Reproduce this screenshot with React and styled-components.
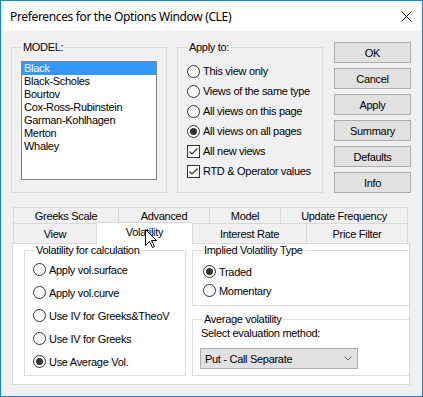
import React from 'react';
import styled, {createGlobalStyle} from "styled-components";

//CSS Starts
const GlobalStyle = createGlobalStyle`
  body {
    margin: 0;
    background: #f0f0f0;
  }
`;
const Window = styled.div`
  position: relative;
  width: 423px;
  height: 397px;
  box-sizing: border-box;
  border: 1px solid #1883d7;
  background: #f0f0f0;
  display: flex;
  flex-direction: column;
  font-family: "Liberation Sans", Arial, sans-serif;
  font-size: 11px;
  letter-spacing: -0.3px;
  color: #000;
`;
const TitleBar = styled.div`
  height: 30px;
  flex-shrink: 0;
  background: #fff;
  display: flex;
  align-items: center;
  justify-content: space-between;
  padding: 0 10px 0 9px;
`;
const Title = styled.span`
  font-family: "Noto Sans", "Open Sans", sans-serif;
  font-size: 12px;
  letter-spacing: -0.35px;
`;
const Body = styled.div`
  padding: 10px 10px 0 10px;
  display: flex;
  flex-direction: column;
`;
const TopRow = styled.div`
  display: flex;
  align-items: flex-start;
`;
const GroupBox = styled.fieldset`
  margin: ${props => props.$mt || 0}px 0 0 ${props => props.$gap || 0}px;
  padding: ${props => props.$top || 0}px 0 0 9px;
  border: 1px solid #dcdcdc;
  ${props => props.$open && 'border-right: none;'}
  min-width: 0;
  box-sizing: border-box;
  width: ${props => props.$w ? props.$w + 'px' : 'auto'};
  height: ${props => props.$h}px;
  display: flex;
  flex-direction: column;
`;
const Legend = styled.legend`
  padding: 0 2px;
  line-height: 13px;
`;
const ListBox = styled.div`
  width: 136px;
  height: 119px;
  box-sizing: border-box;
  border: 1px solid #828282;
  background: #fff;
`;
const ListItem = styled.div`
  height: 13px;
  line-height: 13px;
  padding-left: 2px;
  background: ${props => props.$selected ? '#3399ff' : 'transparent'};
  color: ${props => props.$selected ? '#fff' : '#000'};
`;
const OptionRow = styled.div`
  height: ${props => props.$h}px;
  display: flex;
  align-items: center;
  gap: 3px;
  margin-left: ${props => props.$shift || 0}px;
  white-space: nowrap;
`;
const RadioCircle = styled.span`
  width: 13px;
  height: 13px;
  box-sizing: border-box;
  border: 1px solid #333;
  border-radius: 50%;
  background: #fff;
  display: flex;
  align-items: center;
  justify-content: center;
  flex-shrink: 0;
  &::after {
    content: "";
    width: 7px;
    height: 7px;
    border-radius: 50%;
    background: ${props => props.$checked ? '#333' : 'transparent'};
  }
`;
const CheckSquare = styled.span`
  width: 13px;
  height: 13px;
  box-sizing: border-box;
  border: 1px solid #333;
  background: #fff;
  display: flex;
  flex-shrink: 0;
`;
const ButtonColumn = styled.div`
  margin: 1px 0 0 11px;
  display: flex;
  flex-direction: column;
  gap: 5px;
`;
const Button = styled.button`
  width: 77px;
  height: 21px;
  padding: 0;
  box-sizing: border-box;
  border: 1px solid #adadad;
  background: #e1e1e1;
  font: inherit;
  letter-spacing: inherit;
  color: #000;
`;
const Tabs = styled.div`
  margin: 14px 0 0 1px;
  width: 398px;
  display: flex;
  flex-direction: column;
`;
const TabRow = styled.div`
  display: flex;
  align-items: flex-start;
  padding-left: 1px;
  height: ${props => props.$h}px;
`;
const Tab = styled.div`
  width: ${props => props.$w}px;
  height: ${props => props.$h}px;
  box-sizing: border-box;
  margin-left: -1px;
  &:first-child { margin-left: 0; }
  border: 1px solid #d9d9d9;
  border-bottom: none;
  background: #f0f0f0;
  display: flex;
  align-items: center;
  justify-content: center;
  white-space: nowrap;
`;
const ActiveTab = styled(Tab)`
  position: relative;
  z-index: 1;
  margin-top: -1px;
  height: 22px;
  background: #fff;
  padding-bottom: 3px;
`;
const Panel = styled.div`
  height: 142px;
  box-sizing: border-box;
  border: 1px solid #d9d9d9;
  background: #fff;
  display: flex;
  align-items: flex-start;
  padding-left: 11px;
`;
const RightColumn = styled.div`
  flex: 1;
  margin-left: 6px;
  display: flex;
  flex-direction: column;
`;
const Caption = styled.div`
  line-height: 13px;
  margin-left: -1px;
`;
const Combo = styled.div`
  margin: 8px 0 0 -2px;
  width: 158px;
  height: 21px;
  box-sizing: border-box;
  border: 1px solid #adadad;
  background: #e1e1e1;
  display: flex;
  align-items: center;
  justify-content: space-between;
  padding: 0 5px 0 4px;
`;
const Cursor = styled.svg`
  position: absolute;
  left: 144px;
  top: 228px;
  z-index: 5;
`;
//CSS Ends

const Radio = ({checked, label, h, shift}) => (
    <OptionRow $h={h} $shift={shift}>
        <RadioCircle $checked={checked}/>
        {label}
    </OptionRow>
);

const Check = ({label}) => (
    <OptionRow $h={20}>
        <CheckSquare>
            <svg width="11" height="11" viewBox="0 0 11 11">
                <polyline points="1.5,5.5 4,8 9.5,2.5" fill="none" stroke="#333" strokeWidth="1.2"/>
            </svg>
        </CheckSquare>
        {label}
    </OptionRow>
);

const models = ["Black", "Black-Scholes", "Bourtov", "Cox-Ross-Rubinstein", "Garman-Kohlhagen", "Merton", "Whaley"];

const App = () => {
    return (
        <Window>
            <GlobalStyle/>
            <TitleBar>
                <Title>Preferences for the Options Window (CLE)</Title>
                <svg width="11" height="11" viewBox="0 0 11 11">
                    <path d="M0.5 0.5 L10.5 10.5 M10.5 0.5 L0.5 10.5" stroke="#000" strokeWidth="1"/>
                </svg>
            </TitleBar>
            <Body>
                <TopRow>
                    <GroupBox $w={156} $h={152} $top={7}>
                        <Legend>MODEL:</Legend>
                        <ListBox>
                            {models.map((m, i) => <ListItem key={m} $selected={i === 0}>{m}</ListItem>)}
                        </ListBox>
                    </GroupBox>
                    <GroupBox $w={146} $h={152} $top={7} $gap={10}>
                        <Legend>Apply to:</Legend>
                        <Radio h={20} label="This view only"/>
                        <Radio h={20} label="Views of the same type"/>
                        <Radio h={20} label="All views on this page"/>
                        <Radio h={20} checked label="All views on all pages"/>
                        <Check label="All new views"/>
                        <Check label="RTD & Operator values"/>
                    </GroupBox>
                    <ButtonColumn>
                        <Button>OK</Button>
                        <Button>Cancel</Button>
                        <Button>Apply</Button>
                        <Button>Summary</Button>
                        <Button>Defaults</Button>
                        <Button>Info</Button>
                    </ButtonColumn>
                </TopRow>
                <Tabs>
                    <TabRow $h={16}>
                        <Tab $w={106} $h={16}>Greeks Scale</Tab>
                        <Tab $w={92} $h={16}>Advanced</Tab>
                        <Tab $w={72} $h={16}>Model</Tab>
                        <Tab $w={128} $h={16}>Update Frequency</Tab>
                    </TabRow>
                    <TabRow $h={20}>
                        <Tab $w={84} $h={20}>View</Tab>
                        <ActiveTab $w={97}>Volatility</ActiveTab>
                        <Tab $w={115} $h={20}>Interest Rate</Tab>
                        <Tab $w={102} $h={20}>Price Filter</Tab>
                    </TabRow>
                    <Panel>
                        <GroupBox $w={162} $h={132} $top={1}>
                            <Legend>Volatility for calculation</Legend>
                            <Radio h={23} shift={-1} label="Apply vol.surface"/>
                            <Radio h={23} shift={-1} label="Apply vol.curve"/>
                            <Radio h={23} shift={-1} label="Use IV for Greeks&TheoV"/>
                            <Radio h={23} shift={-1} label="Use IV for Greeks"/>
                            <Radio h={23} shift={-1} checked label="Use Average Vol."/>
                        </GroupBox>
                        <RightColumn>
                            <GroupBox $open $h={62} $top={5}>
                                <Legend>Implied Volatility Type</Legend>
                                <Radio h={19} shift={1} checked label="Traded"/>
                                <Radio h={19} shift={1} label="Momentary"/>
                            </GroupBox>
                            <GroupBox $open $h={63} $top={1} $mt={7}>
                                <Legend>Average volatility</Legend>
                                <Caption>Select evaluation method:</Caption>
                                <Combo>
                                    <span>Put - Call Separate</span>
                                    <svg width="8" height="5" viewBox="0 0 8 5">
                                        <polyline points="0.5,0.5 4,4 7.5,0.5" fill="none" stroke="#606060" strokeWidth="1"/>
                                    </svg>
                                </Combo>
                            </GroupBox>
                        </RightColumn>
                    </Panel>
                </Tabs>
            </Body>
            <Cursor width="13" height="20" viewBox="0 0 13 20">
                <path d="M0.5 0.5 L0.5 16.5 L4.5 12.5 L7.5 18.5 L9.5 17.5 L6.5 11.5 L11.5 11.5 Z" fill="#fff" stroke="#000" strokeWidth="1"/>
            </Cursor>
        </Window>
    );
};

export default App;
